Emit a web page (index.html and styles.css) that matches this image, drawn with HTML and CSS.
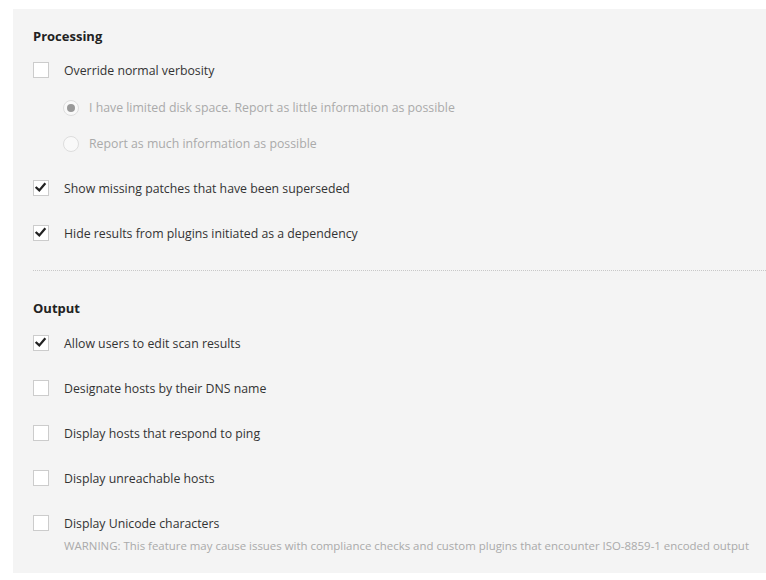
FILE: index.html
```html
<!DOCTYPE html>
<html>
<head>
<meta charset="utf-8">
<link rel="stylesheet" href="styles.css">
</head>
<body>
<div class="panel">
  <section class="section">
    <h3 class="heading">Processing</h3>
    <div class="options">
      <div class="option-block">
        <label class="row">
          <span class="checkbox"></span>
          <span class="label">Override normal verbosity</span>
        </label>
        <div class="radios">
          <label class="radio-row">
            <span class="radio checked"></span>
            <span class="radio-label">I have limited disk space. Report as little information as possible</span>
          </label>
          <label class="radio-row">
            <span class="radio"></span>
            <span class="radio-label">Report as much information as possible</span>
          </label>
        </div>
      </div>
      <label class="row">
        <span class="checkbox checked"><svg viewBox="0 0 16 16" width="16" height="16"><polyline points="3.5,7.8 6.3,10.4 11.6,4.2" fill="none" stroke="#222" stroke-width="2.3" stroke-linecap="square" stroke-linejoin="miter"/></svg></span>
        <span class="label">Show missing patches that have been superseded</span>
      </label>
      <label class="row">
        <span class="checkbox checked"><svg viewBox="0 0 16 16" width="16" height="16"><polyline points="3.5,7.8 6.3,10.4 11.6,4.2" fill="none" stroke="#222" stroke-width="2.3" stroke-linecap="square" stroke-linejoin="miter"/></svg></span>
        <span class="label">Hide results from plugins initiated as a dependency</span>
      </label>
    </div>
  </section>
  <hr class="separator">
  <section class="section section-output">
    <h3 class="heading">Output</h3>
    <div class="options">
      <label class="row">
        <span class="checkbox checked"><svg viewBox="0 0 16 16" width="16" height="16"><polyline points="3.5,7.8 6.3,10.4 11.6,4.2" fill="none" stroke="#222" stroke-width="2.3" stroke-linecap="square" stroke-linejoin="miter"/></svg></span>
        <span class="label">Allow users to edit scan results</span>
      </label>
      <label class="row">
        <span class="checkbox"></span>
        <span class="label">Designate hosts by their DNS name</span>
      </label>
      <label class="row">
        <span class="checkbox"></span>
        <span class="label">Display hosts that respond to ping</span>
      </label>
      <label class="row">
        <span class="checkbox"></span>
        <span class="label">Display unreachable hosts</span>
      </label>
      <div class="row row-with-note">
        <span class="checkbox"></span>
        <div class="label-group">
          <span class="label">Display Unicode characters</span>
          <span class="warning">WARNING: This feature may cause issues with compliance checks and custom plugins that encounter ISO-8859-1 encoded output</span>
        </div>
      </div>
    </div>
  </section>
</div>
</body>
</html>
```

FILE: styles.css
```css
html, body {
  margin: 0;
  padding: 0;
  background: #ffffff;
}

body {
  font-family: "Open Sans", "Noto Sans", sans-serif;
  font-size: 12.3px;
  color: #333333;
}

.panel {
  margin: 9px 0 0 13px;
  padding: 17px 0 19px 20px;
  background: #f4f4f4;
}

.section {
  display: flex;
  flex-direction: column;
  gap: 16px;
}

.section-output {
  gap: 17px;
}

.heading {
  margin: 0;
  height: 20px;
  line-height: 20px;
  font-size: 13px;
  font-weight: 700;
  color: #222222;
}

.options {
  display: flex;
  flex-direction: column;
  gap: 29px;
}

.option-block {
  display: flex;
  flex-direction: column;
}

.row {
  display: flex;
  align-items: flex-start;
  gap: 15px;
  height: 16px;
}

.row-with-note {
  height: auto;
}

.checkbox {
  flex: none;
  width: 14px;
  height: 14px;
  border: 1px solid #cccccc;
  background: #ffffff;
  position: relative;
}

.checkbox svg {
  position: absolute;
  left: -1px;
  top: -1px;
}

.label {
  line-height: 18px;
  white-space: nowrap;
}

.label-group {
  display: flex;
  flex-direction: column;
  gap: 5px;
}

.warning {
  font-size: 11.43px;
  line-height: 16px;
  color: #aaaaaa;
  white-space: nowrap;
}

.radios {
  display: flex;
  flex-direction: column;
  gap: 20px;
  margin: 22px 0 -1px 30px;
}

.radio-row {
  display: flex;
  align-items: center;
  gap: 10px;
}

.radio {
  flex: none;
  width: 14px;
  height: 14px;
  border: 1px solid #dddddd;
  border-radius: 50%;
  background: #f9f9f9;
  display: flex;
  align-items: center;
  justify-content: center;
}

.radio.checked::after {
  content: "";
  width: 8px;
  height: 8px;
  border-radius: 50%;
  background: #999999;
}

.radio-label {
  line-height: 16px;
  color: #aaaaaa;
  white-space: nowrap;
}

.separator {
  margin: 29px 0 27px 0;
  border: 0;
  border-top: 1px dotted #c8c8c8;
  height: 0;
}
```
